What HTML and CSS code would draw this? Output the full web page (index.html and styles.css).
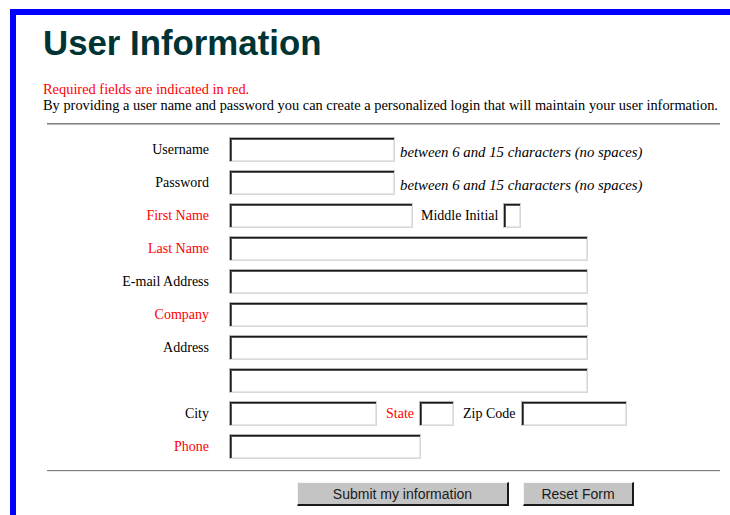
FILE: index.html
```html
<!DOCTYPE html>
<html lang="en">
<head>
<meta charset="utf-8">
<title>User Information</title>
<link rel="stylesheet" href="styles.css">
</head>
<body>
<div class="frame">
  <h1 class="title">User Information</h1>
  <p class="intro"><span class="req">Required fields are indicated in red.</span><br>By providing a user name and password you can create a personalized login that will maintain your user information.</p>
  <hr class="rule">
  <form class="form" action="#">
    <div class="row">
      <label class="lbl" for="username">Username</label>
      <div class="fields"><input class="box w-user" id="username" type="text"><span class="hint">between 6 and 15 characters (no spaces)</span></div>
    </div>
    <div class="row">
      <label class="lbl" for="password">Password</label>
      <div class="fields"><input class="box w-user" id="password" type="password"><span class="hint">between 6 and 15 characters (no spaces)</span></div>
    </div>
    <div class="row">
      <label class="lbl req" for="first">First Name</label>
      <div class="fields"><input class="box w-first" id="first" type="text"><label class="inline gap-8" for="mi">Middle Initial</label><input class="box w-mi gap-5" id="mi" type="text"></div>
    </div>
    <div class="row">
      <label class="lbl req" for="last">Last Name</label>
      <div class="fields"><input class="box w-long" id="last" type="text"></div>
    </div>
    <div class="row">
      <label class="lbl" for="email">E-mail Address</label>
      <div class="fields"><input class="box w-long" id="email" type="text"></div>
    </div>
    <div class="row">
      <label class="lbl req" for="company">Company</label>
      <div class="fields"><input class="box w-long" id="company" type="text"></div>
    </div>
    <div class="row">
      <label class="lbl" for="addr1">Address</label>
      <div class="fields"><input class="box w-long" id="addr1" type="text"></div>
    </div>
    <div class="row">
      <span class="lbl"></span>
      <div class="fields"><input class="box w-long" id="addr2" type="text"></div>
    </div>
    <div class="row">
      <label class="lbl" for="city">City</label>
      <div class="fields"><input class="box w-city" id="city" type="text"><label class="inline req gap-9" for="state">State</label><input class="box w-state gap-5" id="state" type="text"><label class="inline gap-9" for="zip">Zip Code</label><input class="box w-zip gap-5" id="zip" type="text"></div>
    </div>
    <div class="row">
      <label class="lbl req" for="phone">Phone</label>
      <div class="fields"><input class="box w-phone" id="phone" type="text"></div>
    </div>
    <hr class="rule rule-thin">
    <div class="actions">
      <button class="btn btn-submit" type="submit">Submit my information</button>
      <button class="btn btn-reset" type="reset">Reset Form</button>
    </div>
  </form>
</div>
</body>
</html>
```
FILE: styles.css
```css
html, body {
  margin: 0;
  padding: 0;
  background: #ffffff;
  overflow: hidden;
}

body {
  font-family: "Liberation Serif", "Times New Roman", serif;
  font-size: 14px;
  color: #000000;
}

/* page frame with the blue top and left edges */
.frame {
  box-sizing: border-box;
  height: 506px;
  margin: 9px 0 0 10px;
  border-top: 6px solid #0000ff;
  border-left: 6px solid #0000ff;
  padding: 8px 10px 0 27px;
  overflow: hidden;
}

.title {
  margin: 0;
  font-family: "Liberation Sans", Arial, sans-serif;
  font-size: 34.8px;
  line-height: 40px;
  font-weight: bold;
  color: #003333;
}

.intro {
  margin: 18px 0 0 0;
  font-size: 14.4px;
  line-height: 16px;
  white-space: nowrap;
}

.req {
  color: #ff0000;
}

.rule {
  height: 0;
  margin: 10px 0 0 4px;
  border: 0;
  border-top: 1px solid #808080;
  border-bottom: 1px solid #b8b8b8;
}

.rule-thin {
  margin-top: 7px;
  border-bottom-color: #e8e8e8;
}

.form {
  margin: 8px 0 0 0;
}

.row {
  display: grid;
  grid-template-columns: 166px 1fr;
  column-gap: 20px;
  align-items: center;
  height: 33px;
}

.lbl {
  text-align: right;
  line-height: 16px;
}

.fields {
  display: flex;
  align-items: center;
}

.inline {
  line-height: 16px;
  white-space: nowrap;
}

.hint {
  margin-left: 5px;
  padding-top: 4px;
  font-style: italic;
  font-size: 14.8px;
  line-height: 16px;
  white-space: nowrap;
}

.gap-5 { margin-left: 5px; }
.gap-8 { margin-left: 8px; }
.gap-9 { margin-left: 9px; }

/* sunken text boxes */
.box {
  box-sizing: border-box;
  height: 25px;
  margin-top: 0;
  margin-bottom: 0;
  padding: 0 3px;
  border: 1px solid;
  border-color: #b4b4b4 #d8d8d8 #d8d8d8 #b4b4b4;
  box-shadow: inset 1px 1px 0 #1a1a1a, inset 2px 2px 0 #5a5a5a, inset -1px -1px 0 #e6e6e6;
  background: #ffffff;
  font-family: "Liberation Serif", serif;
  font-size: 14px;
  outline: none;
}

.w-user { width: 166px; }
.w-first { width: 184px; }
.w-mi { width: 18px; }
.w-long { width: 359px; }
.w-city { width: 148px; }
.w-state { width: 35px; }
.w-zip { width: 106px; }
.w-phone { width: 192px; }

.actions {
  display: flex;
  gap: 14px;
  margin: 10px 0 0 254px;
}

/* raised push buttons */
.btn {
  box-sizing: border-box;
  height: 24px;
  margin: 0;
  padding: 0;
  border-style: solid;
  border-width: 1px 2px 2px 1px;
  border-color: #f4f4f4 #1a1a1a #1a1a1a #f4f4f4;
  background: #c4c4c4;
  color: #1a1a1a;
  font-family: "Liberation Sans", Arial, sans-serif;
  font-size: 14px;
  line-height: 20px;
}

.btn-submit { width: 212px; }
.btn-reset { width: 111px; }
```
